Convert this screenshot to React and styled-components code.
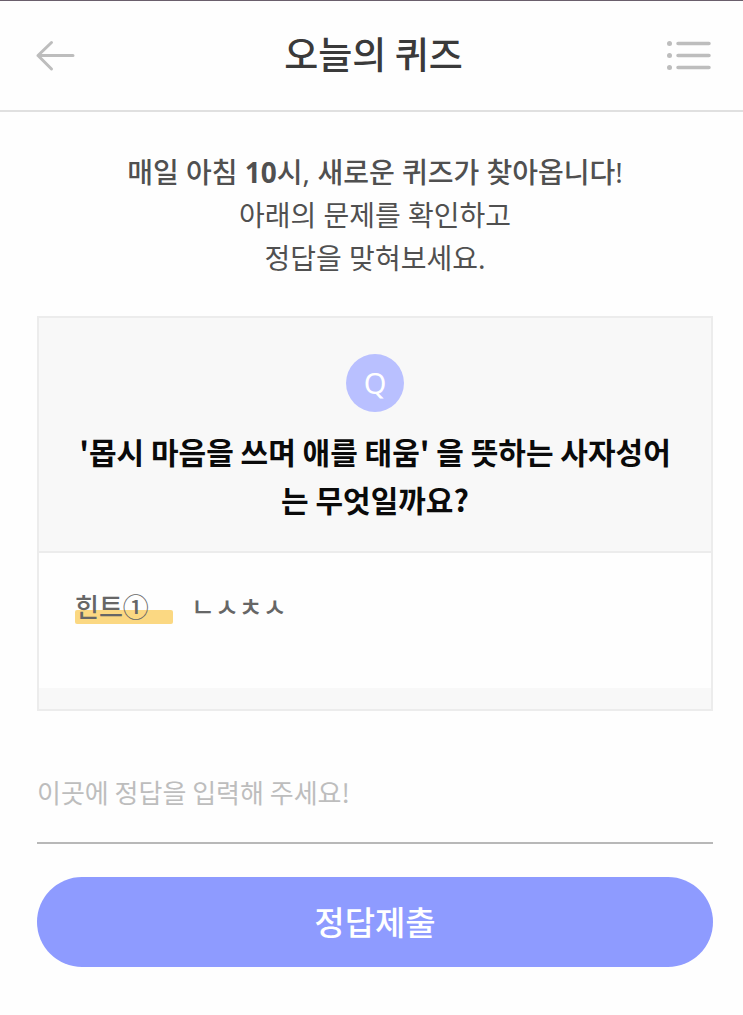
import React, { useState } from 'react';
import styled, { createGlobalStyle } from 'styled-components';

const GlobalStyle = createGlobalStyle`
  * {
    box-sizing: border-box;
  }

  body {
    margin: 0;
    background-color: #fefefe;
    font-family: 'Noto Sans CJK KR', sans-serif;
    color: #505050;
  }
`;

const Page = styled.div`
  border-top: 1px solid #6a5f6c;
`;

const Header = styled.header`
  display: flex;
  align-items: center;
  justify-content: space-between;
  height: 111px;
  padding: 0 32px;
  border-bottom: 2px solid #e0e0e0;
`;

const IconButton = styled.button`
  display: flex;
  padding: 0;
  border: none;
  background: none;
  cursor: pointer;
`;

const Title = styled.h1`
  margin: 0;
  padding-bottom: 6px;
  font-size: 37px;
  font-weight: 500;
  line-height: 48px;
  color: #3a3a3a;
`;

const Main = styled.main`
  padding: 39px 30px 48px 37px;
`;

const Intro = styled.p`
  margin: 0;
  font-family: 'Noto Sans', 'Noto Sans CJK KR', sans-serif;
  font-size: 28px;
  line-height: 43px;
  text-align: center;
`;

const Strong = styled.strong`
  font-weight: ${(props) => (props.$heavy ? 700 : 500)};
`;

const Card = styled.section`
  margin-top: 36px;
  padding-bottom: 21px;
  border: 2px solid #ececec;
  background-color: #f8f8f8;
`;

const Question = styled.div`
  display: flex;
  flex-direction: column;
  align-items: center;
  padding: 36px 32px 28px;
  border-bottom: 2px solid #ececec;
`;

const Badge = styled.span`
  display: flex;
  align-items: center;
  justify-content: center;
  width: 58px;
  height: 58px;
  border-radius: 50%;
  background-color: #b9c0ff;
  color: #fff;
  font-family: 'Noto Sans', sans-serif;
  font-size: 29px;
  line-height: 40px;
`;

const QuestionText = styled.h2`
  margin: 15px 0 0;
  font-size: 30px;
  font-weight: 700;
  line-height: 48px;
  text-align: center;
  color: #0a0a0a;
`;

const Hint = styled.div`
  display: flex;
  align-items: flex-start;
  gap: 18px;
  min-height: 135px;
  padding: 34px 36px;
  background-color: #fefefe;
  font-size: 26px;
  font-weight: 500;
  line-height: 38px;
  color: #666;
`;

const HintLabel = styled.span`
  position: relative;
  z-index: 0;
  width: 98px;

  /* highlighter stroke behind the label */
  &::before {
    content: '';
    position: absolute;
    z-index: -1;
    left: 0;
    right: 0;
    bottom: 1px;
    height: 14px;
    border-radius: 2px;
    background-color: #fbd882;
  }
`;

const AnswerInput = styled.input`
  display: block;
  width: 100%;
  height: 101px;
  margin-top: 32px;
  padding: 0 0 2px;
  border: none;
  border-bottom: 2px solid #b8b8b8;
  border-radius: 0;
  outline: none;
  background: none;
  font-family: inherit;
  font-size: 26px;
  color: #505050;

  &::placeholder {
    color: #bdbdbd;
    opacity: 1;
  }
`;

const SubmitButton = styled.button`
  display: block;
  width: 100%;
  height: 90px;
  margin-top: 33px;
  padding: 0 0 2px;
  border: none;
  border-radius: 45px;
  background-color: #8e9bff;
  color: #fff;
  font-family: inherit;
  font-size: 33px;
  font-weight: 500;
  cursor: pointer;
`;

const BackIcon = () => (
  <svg width="48" height="34" viewBox="0 0 48 34" fill="none" stroke="#bdbdbd" strokeWidth="3" strokeLinecap="round" strokeLinejoin="round">
    <path d="M41 16.5H6M19.5 3.5L6 16.5l13.5 13.5" />
  </svg>
);

const ListIcon = () => (
  <svg width="44" height="34" viewBox="0 0 44 34" fill="#bdbdbd" stroke="#bdbdbd" strokeLinecap="round">
    <path d="M11 4.5h31M11 16.5h31M11 28.5h31" strokeWidth="3.5" />
    <g stroke="none">
      <circle cx="2.5" cy="4.5" r="2.5" />
      <circle cx="2.5" cy="16.5" r="2.5" />
      <circle cx="2.5" cy="28.5" r="2.5" />
    </g>
  </svg>
);

const App = () => {
  const [answer, setAnswer] = useState('');

  const handleSubmit = (e) => {
    e.preventDefault();
    setAnswer('');
  };

  return (
    <Page>
      <GlobalStyle />
      <Header>
        <IconButton type="button" aria-label="뒤로"><BackIcon /></IconButton>
        <Title>오늘의 퀴즈</Title>
        <IconButton type="button" aria-label="메뉴"><ListIcon /></IconButton>
      </Header>

      <Main>
        <Intro>
          <Strong>매일 아침 <Strong $heavy>10</Strong>시</Strong>, <Strong>새로운 퀴즈가 찾아옵니다</Strong>!
          <br />
          아래의 문제를 확인하고
          <br />
          정답을 맞혀보세요.
        </Intro>

        <Card>
          <Question>
            <Badge>Q</Badge>
            <QuestionText>
              '몹시 마음을 쓰며 애를 태움' 을 뜻하는 사자성어
              <br />
              는 무엇일까요?
            </QuestionText>
          </Question>
          <Hint>
            <HintLabel>힌트①</HintLabel>
            <span>ㄴㅅㅊㅅ</span>
          </Hint>
        </Card>

        <form onSubmit={handleSubmit}>
          <AnswerInput
            type="text"
            name="answer"
            aria-label="정답"
            placeholder="이곳에 정답을 입력해 주세요!"
            value={answer}
            onChange={(e) => setAnswer(e.target.value)}
          />
          <SubmitButton type="submit">정답제출</SubmitButton>
        </form>
      </Main>
    </Page>
  );
};

export default App;
